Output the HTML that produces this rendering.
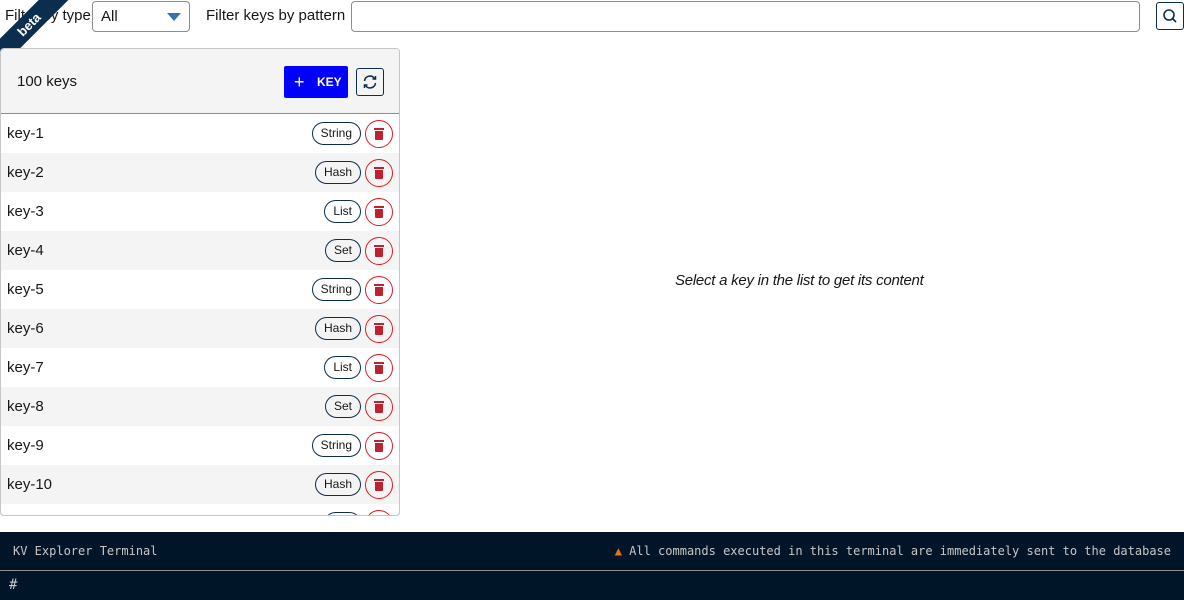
<!DOCTYPE html>
<html><head><style>
*{box-sizing:border-box;margin:0;padding:0}
body{width:1184px;height:600px;background:#fff;font-family:"Liberation Sans",sans-serif;position:relative;overflow:hidden;color:#161616}
.abs{position:absolute}
.lbl{font-size:15px;top:7px}
.sel{left:92px;top:1px;width:98px;height:31px;border:1px solid #8d8d8d;border-radius:4px;font-size:15px;padding:6px 8px}
.sel:after{content:"";position:absolute;right:8px;top:11px;border-left:7px solid transparent;border-right:7px solid transparent;border-top:8px solid #3a6fb0}
.inp{left:351px;top:1px;width:789px;height:31px;border:1px solid #8d8d8d;border-radius:4px}
.sbtn{left:1156px;top:2px;width:28px;height:28px;border:1px solid #0b2e4f;border-radius:3px}
.ribbon{left:-36px;top:14px;width:130px;height:21px;background:#0b2e4f;color:#fff;font-size:13px;font-weight:bold;text-align:center;line-height:21px;transform:rotate(-45deg)}
.panel{left:0;top:48px;width:400px;height:468px;border:1px solid #c6c6c6;border-radius:4px;overflow:hidden}
.hdr{height:65px;background:#f4f4f4;border-bottom:1px solid #8d8d8d;position:relative}
.row{height:39px;position:relative;font-size:15px;padding:11px 6px}
.row:nth-child(even){background:#f4f4f4}
.badge{position:absolute;right:38px;top:8px;height:23px;border:1px solid #0b2e4f;border-radius:12px;font-size:12px;padding:3px 8px;color:#161616}
.del{position:absolute;right:6px;top:6px;width:28px;height:28px;border:1px solid #da1e28;border-radius:50%}
.del:before{content:"";position:absolute;left:9px;top:10px;width:8px;height:9px;background:#c0212f;border-radius:0 0 1px 1px}
.del:after{content:"";position:absolute;left:8px;top:7px;width:10px;height:2px;background:#c0212f}
.term{left:0;top:532px;width:1184px;height:68px;background:#001628;font-family:"DejaVu Sans Mono","Liberation Mono",monospace;font-size:12px;color:#c6c6c6}
</style></head><body>
<div class="abs lbl" style="left:5px">Filter by type</div>
<div class="abs sel">All</div>
<div class="abs lbl" style="left:206px">Filter keys by pattern</div>
<div class="abs inp"></div>
<div class="abs sbtn"><svg width="26" height="26" viewBox="0 0 26 26"><circle cx="12" cy="12" r="5" fill="none" stroke="#0b2e4f" stroke-width="1.6"/><line x1="15.5" y1="15.5" x2="19" y2="19" stroke="#0b2e4f" stroke-width="1.6"/></svg></div>
<div class="abs ribbon">beta</div>
<div class="abs panel">
 <div class="hdr">
  <div class="abs" style="left:16px;top:24px;font-size:15px">100 keys</div>
  <div class="abs" style="left:283px;top:17px;width:64px;height:32px;background:#0000ff;border-radius:2px;color:#fff;font-size:12px;font-weight:bold;line-height:32px"><span style="position:absolute;left:10px;font-size:18px;font-weight:normal">+</span><span style="position:absolute;left:33px">KEY</span></div>
  <div class="abs" style="left:355px;top:19px;width:28px;height:28px;border:1px solid #0b2e4f;border-radius:3px"><svg width="26" height="26" viewBox="0 0 26 26"><path d="M7.5 12a5.5 5.5 0 0 1 10-2.5M18.5 14a5.5 5.5 0 0 1-10 2.5" fill="none" stroke="#0b2e4f" stroke-width="1.5"/><path d="M18.5 7v3h-3M7.5 19v-3h3" fill="none" stroke="#0b2e4f" stroke-width="1.5"/></svg></div>
 </div>
 <div>
  <div class="row">key-1<span class="badge">String</span><span class="del"></span></div>
  <div class="row">key-2<span class="badge">Hash</span><span class="del"></span></div>
  <div class="row">key-3<span class="badge">List</span><span class="del"></span></div>
  <div class="row">key-4<span class="badge">Set</span><span class="del"></span></div>
  <div class="row">key-5<span class="badge">String</span><span class="del"></span></div>
  <div class="row">key-6<span class="badge">Hash</span><span class="del"></span></div>
  <div class="row">key-7<span class="badge">List</span><span class="del"></span></div>
  <div class="row">key-8<span class="badge">Set</span><span class="del"></span></div>
  <div class="row">key-9<span class="badge">String</span><span class="del"></span></div>
  <div class="row">key-10<span class="badge">Hash</span><span class="del"></span></div>
  <div class="row">key-11<span class="badge">List</span><span class="del"></span></div>
 </div>
</div>
<div class="abs" style="left:675px;top:272px;font-size:15px;font-style:italic;letter-spacing:-0.25px">Select a key in the list to get its content</div>
<div class="abs term">
 <div style="height:39px;border-bottom:1px solid #8d8d8d;position:relative">
  <span class="abs" style="left:13px;top:12px">KV Explorer Terminal</span>
  <span class="abs" style="right:13px;top:12px"><span style="color:#e8711a">▲</span> All commands executed in this terminal are immediately sent to the database</span>
 </div>
 <div style="padding:6px 9px;font-size:14px">#</div>
</div>
</body></html>
